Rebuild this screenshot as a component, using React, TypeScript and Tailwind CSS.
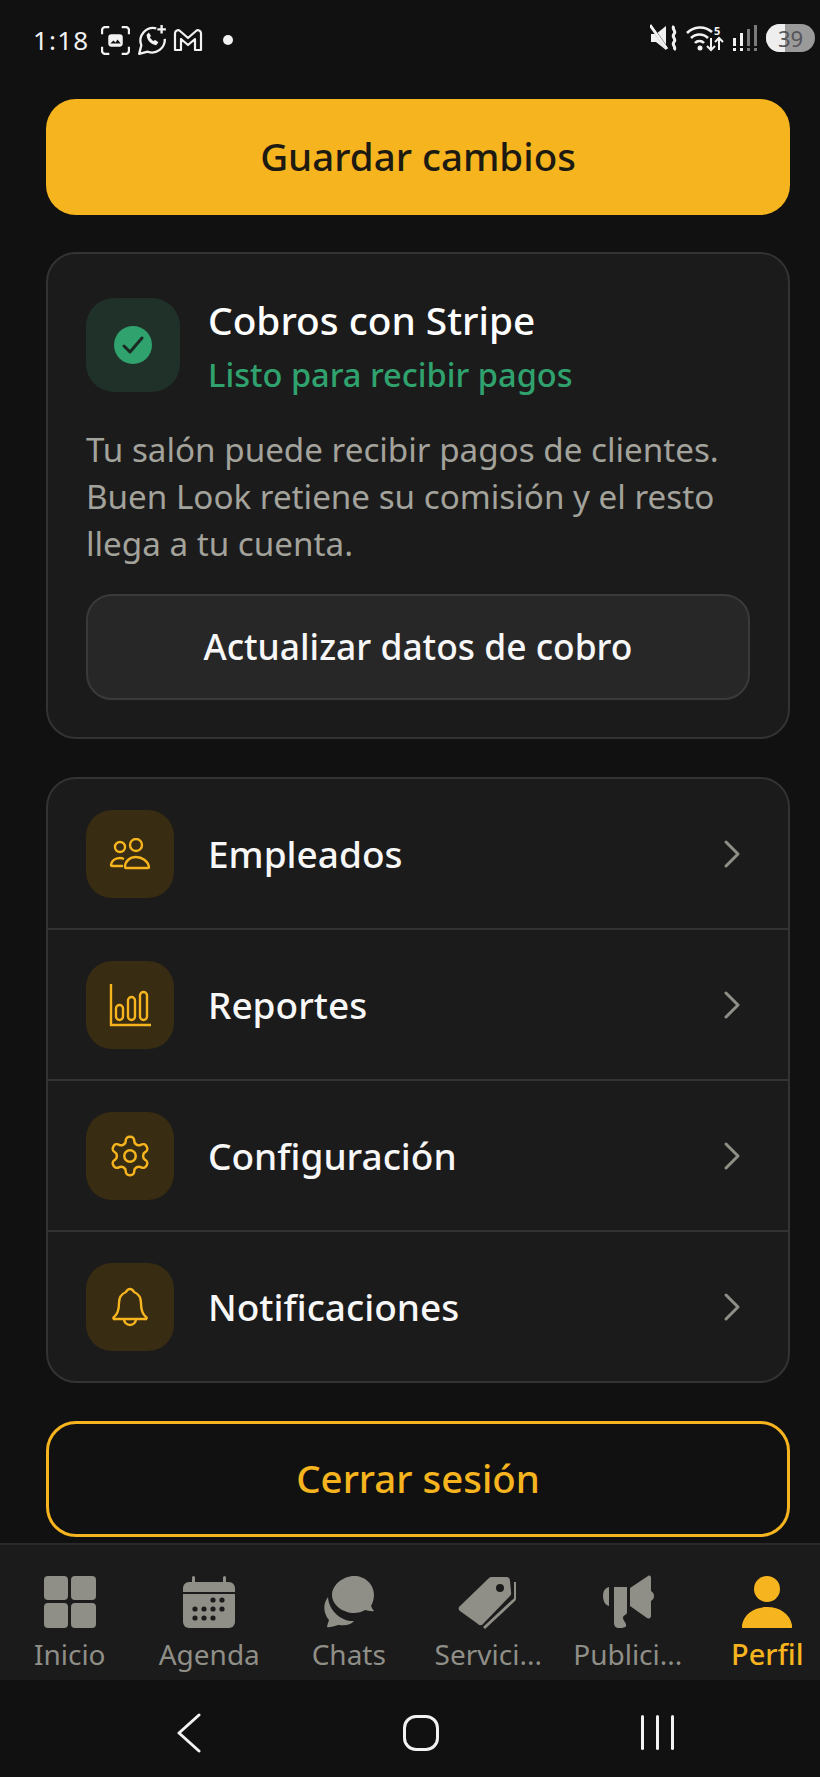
import React from "react";

const gold = "#f6b41e";
const gray = "#8f8e87";

function Row({ label, icon, last }: { label: string; icon: React.ReactNode; last?: boolean }) {
  return (
    <div className={`flex items-center pl-[38px] pr-[46px] ${last ? "h-[149px]" : "h-[151px] border-b-2 border-[#333333]"}`}>
      <div className="flex h-[88px] w-[88px] items-center justify-center rounded-[26px] bg-[#382c12]">{icon}</div>
      <span className="ml-[34px] flex-1 text-[37px] font-medium leading-none text-[#f7f7f7]">{label}</span>
      <svg width="20" height="30" viewBox="0 0 20 30" fill="none" stroke="#8f8e87" strokeWidth="3" strokeLinecap="round" strokeLinejoin="round">
        <path d="M4 3l12 12L4 27" />
      </svg>
    </div>
  );
}

function NavItem({ label, icon, active }: { label: string; icon: React.ReactNode; active?: boolean }) {
  return (
    <div className="flex w-[139.5px] shrink-0 flex-col items-center">
      <div className="flex h-[56px] items-center justify-center">{icon}</div>
      <span className={`mt-[6px] leading-[36px] ${active ? "text-[29px] font-medium text-[#f6b41e]" : "text-[28px] text-[#8f8e87]"}`}>{label}</span>
    </div>
  );
}

export default function App() {
  return (
    <div className="flex h-[1777px] w-[820px] flex-col overflow-hidden bg-[#111111] font-['Noto_Sans','Open_Sans',sans-serif]">
      {/* status bar */}
      <div className="flex h-[99px] shrink-0 items-start justify-between pl-[33px] pr-[5px] pt-[24px]">
        <div className="flex items-center">
          <span className="text-[26px] leading-[32px] tracking-[1.2px] text-[#f2f2f2]">1:18</span>
          <svg className="ml-[12px]" width="29" height="29" viewBox="0 0 28 28" fill="none" stroke="#f2f2f2" strokeWidth="2.2">
            <path d="M1 8V4a3 3 0 0 1 3-3h4M20 1h4a3 3 0 0 1 3 3v4M1 20v4a3 3 0 0 0 3 3h4M20 27h4a3 3 0 0 0 3-3v-4" />
            <rect x="7" y="8" width="14" height="12" rx="3" fill="#f2f2f2" stroke="none" />
            <path d="M9 17l3-3 2 2 2-3 3 4z" fill="#111111" stroke="none" />
          </svg>
          <svg className="ml-[6px]" width="32" height="32" viewBox="0 0 30 30" fill="none" stroke="#f2f2f2" strokeWidth="2.2">
            <path d="M19 4a12 12 0 0 0-14 16L3 28l8-2a12 12 0 0 0 16-12" strokeLinejoin="round" />
            <path d="M10 10c0 5 4 9 9 10l2-3-3-2-2 1c-1-1-2-2-3-3l1-2-2-3z" fill="#f2f2f2" stroke="none" />
            <path d="M24 1v8M20 5h8" />
          </svg>
          <svg className="ml-[5px]" width="30" height="24" viewBox="0 0 30 24" fill="none" stroke="#f2f2f2" strokeWidth="2.2" strokeLinejoin="round">
            <path d="M2 5a3 3 0 0 1 5-2l8 7 8-7a3 3 0 0 1 5 2v17h-6V11l-7 6-7-6v11H2z" />
          </svg>
          <div className="ml-[20px] h-[10px] w-[10px] rounded-full bg-[#f2f2f2]" />
        </div>
        <div className="flex items-center">
          <svg width="28" height="28" viewBox="0 0 28 28" fill="#f2f2f2">
            <path d="M1 10h5l10-8v24L6 18H1z" />
            <path d="M1 2l17 24" stroke="#111111" strokeWidth="3" />
            <path d="M0 1l17 24" stroke="#f2f2f2" strokeWidth="3" />
            <path d="M24 2c-3 3 3 5 0 8s3 5 0 8 3 5 0 8" fill="none" stroke="#f2f2f2" strokeWidth="3" />
          </svg>
          <svg className="ml-[8px]" width="38" height="28" viewBox="0 0 38 28" fill="none" stroke="#f2f2f2" strokeWidth="2.6">
            <path d="M1 9a18 18 0 0 1 25-1M5 14a12 12 0 0 1 17 0M9 19a6 6 0 0 1 9 0" />
            <circle cx="14" cy="24" r="2.5" fill="#f2f2f2" stroke="none" />
            <path d="M25 14v12M21 22l4 4 4-4M33 26V14M29 18l4-4 4 4" strokeWidth="2" />
            <text x="28" y="11" fontSize="11" fontWeight="700" fill="#f2f2f2" stroke="none" fontFamily="Noto Sans">5</text>
          </svg>
          <svg className="ml-[8px]" width="26" height="28" viewBox="0 0 26 28" fill="#f2f2f2">
            <rect x="1" y="14" width="3" height="8" />
            <rect x="1" y="24" width="3" height="3" />
            <rect x="8" y="9" width="3" height="13" />
            <rect x="8" y="24" width="3" height="3" />
            <rect x="15" y="5" width="3" height="17" fill="#7a7a7a" />
            <rect x="15" y="24" width="3" height="3" fill="#7a7a7a" />
            <rect x="22" y="1" width="3" height="21" fill="#7a7a7a" />
            <rect x="22" y="24" width="3" height="3" fill="#7a7a7a" />
          </svg>
          <div className="relative ml-[8px] flex h-[28px] w-[49px] items-center justify-center overflow-hidden rounded-full bg-[#9a9a9a]">
            <div className="absolute inset-y-0 left-0 w-[19px] bg-[#eeeeee]" />
            <span className="relative text-[22px] leading-none text-[#55555a]">39</span>
          </div>
        </div>
      </div>

      {/* content */}
      <div className="flex flex-1 flex-col pl-[46px] pr-[30px]">
        <div className="flex h-[116px] shrink-0 items-center justify-center rounded-[30px] bg-[#f6b41e] text-[38.5px] font-medium text-[#1d1a12]">
          Guardar cambios
        </div>

        <div className="mt-[37px] h-[487px] shrink-0 rounded-[30px] border-2 border-[#333333] bg-[#1b1b1b] px-[38px] pt-[44px]">
          <div className="flex h-[94px]">
            <div className="flex h-[94px] w-[94px] items-center justify-center rounded-[28px] bg-[#1f3129]">
              <svg width="40" height="40" viewBox="0 0 40 40">
                <circle cx="20" cy="20" r="19" fill="#30a26e" />
                <path d="M11 21l6 6 12-14" fill="none" stroke="#1a2a23" strokeWidth="3" strokeLinecap="round" strokeLinejoin="round" />
              </svg>
            </div>
            <div className="ml-[28px] flex flex-col">
              <span className="-mt-[2px] text-[38.8px] font-medium leading-[48px] text-white">Cobros con Stripe</span>
              <span className="mt-[9px] text-[32.6px] font-medium leading-[44px] text-[#30a26e]">Listo para recibir pagos</span>
            </div>
          </div>
          <p className="mt-[34px] text-[33.2px] leading-[47px] text-[#a3a29b]">
            Tu salón puede recibir pagos de clientes.
            <br />
            Buen Look retiene su comisión y el resto
            <br />
            llega a tu cuenta.
          </p>
          <div className="mt-[27px] flex h-[106px] items-center justify-center rounded-[26px] border-2 border-[#3a3a3a] bg-[#272727] text-[35.4px] font-medium text-[#f7f7f7]">
            Actualizar datos de cobro
          </div>
        </div>

        <div className="mt-[38px] shrink-0 overflow-hidden rounded-[30px] border-2 border-[#333333] bg-[#1b1b1b]">
          <Row
            label="Empleados"
            icon={
              <svg width="42" height="32" viewBox="0 0 42 32" fill="none" stroke={gold} strokeWidth="2.4">
                <circle cx="11" cy="9" r="5" />
                <circle cx="27" cy="7" r="6" />
                <path d="M15 21c-4-2-12-1-13 6a1 1 0 0 0 1 1h11" strokeLinejoin="round" />
                <path d="M16 29c0-6 5-10 11-10s12 4 13 10a1 1 0 0 1-1 1H17a1 1 0 0 1-1-1z" strokeLinejoin="round" />
              </svg>
            }
          />
          <Row
            label="Reportes"
            icon={
              <svg width="42" height="44" viewBox="0 0 42 44" fill="none" stroke={gold} strokeWidth="2.4">
                <path d="M2 1v41h40" />
                <rect x="7" y="22" width="7" height="15" rx="3.5" />
                <rect x="19" y="14" width="7" height="23" rx="3.5" />
                <rect x="31" y="9" width="7" height="28" rx="3.5" />
              </svg>
            }
          />
          <Row
            label="Configuración"
            icon={
              <svg width="46" height="46" viewBox="0 0 24 24" fill="none" stroke={gold} strokeWidth="1.3" strokeLinecap="round" strokeLinejoin="round">
                <path d="M12.22 2h-.44a2 2 0 0 0-2 2v.18a2 2 0 0 1-1 1.73l-.43.25a2 2 0 0 1-2 0l-.15-.08a2 2 0 0 0-2.73.73l-.22.38a2 2 0 0 0 .73 2.73l.15.1a2 2 0 0 1 1 1.72v.51a2 2 0 0 1-1 1.74l-.15.09a2 2 0 0 0-.73 2.73l.22.38a2 2 0 0 0 2.73.73l.15-.08a2 2 0 0 1 2 0l.43.25a2 2 0 0 1 1 1.73V20a2 2 0 0 0 2 2h.44a2 2 0 0 0 2-2v-.18a2 2 0 0 1 1-1.73l.43-.25a2 2 0 0 1 2 0l.15.08a2 2 0 0 0 2.73-.73l.22-.39a2 2 0 0 0-.73-2.73l-.15-.08a2 2 0 0 1-1-1.74v-.5a2 2 0 0 1 1-1.74l.15-.09a2 2 0 0 0 .73-2.73l-.22-.38a2 2 0 0 0-2.73-.73l-.15.08a2 2 0 0 1-2 0l-.43-.25a2 2 0 0 1-1-1.73V4a2 2 0 0 0-2-2z" />
                <circle cx="12" cy="12" r="3" />
              </svg>
            }
          />
          <Row
            last
            label="Notificaciones"
            icon={
              <svg width="36" height="40" viewBox="0 0 36 40" fill="none" stroke={gold} strokeWidth="2.4" strokeLinejoin="round">
                <path d="M18 2c-2 0-3 1-4 3-5 2-7 6-7 11 0 7-1 11-5 14a1 1 0 0 0 1 2h30a1 1 0 0 0 1-2c-4-3-5-7-5-14 0-5-2-9-7-11-1-2-2-3-4-3z" />
                <path d="M12 32a6 6 0 0 0 12 0" />
              </svg>
            }
          />
        </div>

        <div className="mt-[38px] flex h-[116px] shrink-0 items-center justify-center rounded-[30px] border-[3px] border-[#f6b41e] text-[38.4px] font-medium text-[#f6b41e]">
          Cerrar sesión
        </div>
      </div>

      {/* tab bar */}
      <div className="flex h-[137px] shrink-0 border-t-2 border-[#2a2a2a] bg-[#1b1b1b] pt-[29px]">
        <NavItem
          label="Inicio"
          icon={
            <svg width="52" height="52" viewBox="0 0 52 52" fill={gray}>
              <rect x="0" y="0" width="24" height="24" rx="4" />
              <rect x="27" y="0" width="25" height="24" rx="4" />
              <rect x="0" y="27" width="24" height="25" rx="4" />
              <rect x="27" y="27" width="25" height="25" rx="4" />
            </svg>
          }
        />
        <NavItem
          label="Agenda"
          icon={
            <svg width="52" height="52" viewBox="0 0 52 52" fill={gray}>
              <path d="M0 12a6 6 0 0 1 6-6h3V1.500a1.500 1.500 0 0 1 3 0V6h28V1.500a1.500 1.500 0 0 1 3 0V6h3a6 6 0 0 1 6 6v4H0z" />
              <path d="M0 18h52v28a6 6 0 0 1-6 6H6a6 6 0 0 1-6-6z" />
              <g fill="#1b1b1b">
                <circle cx="30" cy="24" r="2.600" /><circle cx="39" cy="24" r="2.600" />
                <circle cx="12" cy="33" r="2.600" /><circle cx="21" cy="33" r="2.600" /><circle cx="30" cy="33" r="2.600" /><circle cx="39" cy="33" r="2.600" />
                <circle cx="12" cy="42" r="2.600" /><circle cx="21" cy="42" r="2.600" /><circle cx="30" cy="42" r="2.600" />
              </g>
            </svg>
          }
        />
        <NavItem
          label="Chats"
          icon={
            <svg width="52" height="52" viewBox="0 0 52 52" fill={gray}>
              <path d="M5 21c-6 8-4 17 1 23-1 3-2 6-2 7 4 1 10-2 12-2 6 1 12 0 15-4-10 1-25-8-26-24z" />
              <path d="M31 0c11 0 20 8 20 19 0 5-2 9-3 11 1 2 2 4 3 5-3 1-7-1-9-1-3 2-7 3-11 3C20 37 9 29 9 19S20 0 31 0z" />
            </svg>
          }
        />
        <NavItem
          label="Servici..."
          icon={
            <svg width="60" height="56" viewBox="0 0 60 56" fill={gray}>
              <path d="M2 32L31 4a4 4 0 0 1 3-1h14a4 4 0 0 1 4 4l1 11a4 4 0 0 1-1 4L25 50a3 3 0 0 1-5 0L2 37a3 3 0 0 1 0-5zM42 10a4 4 0 1 0 0 8 4 4 0 0 0 0-8z" fillRule="evenodd" />
              <path d="M56 8h2v16a4 4 0 0 1-1 3L27 55l-2-2 29-27a3 3 0 0 0 2-2z" />
            </svg>
          }
        />
        <NavItem
          label="Publici..."
          icon={
            <svg width="52" height="54" viewBox="0 0 52 54" fill={gray}>
              <path d="M7 12v19c-4-1-6-5-6-10s2-8 6-9z" />
              <path d="M12 12h13v25c0 4-4 2-4 6 0 3 4 5 3 8-1 2-5 2-7 2-3 0-5-2-5-5z" />
              <path d="M28 13L46 1c2-1 3 0 3 2v13c2 1 3 3 3 5s-1 4-3 5v15c0 2-2 3-4 2L28 31z" />
            </svg>
          }
        />
        <NavItem
          active
          label="Perfil"
          icon={
            <svg width="50" height="52" viewBox="0 0 50 52" fill={gold}>
              <circle cx="25" cy="13" r="13" />
              <path d="M1 52c-2 0-1-2-1-3 2-11 12-18 25-18s23 7 25 18c0 1 1 3-1 3z" />
            </svg>
          }
        />
      </div>

      {/* system nav */}
      <div className="relative flex h-[97px] shrink-0 items-start bg-[#111111] pl-[176px] pt-[33px]">
        <svg width="26" height="40" viewBox="0 0 26 40" fill="none" stroke="#f2f2f2" strokeWidth="3" strokeLinecap="round" strokeLinejoin="round">
          <path d="M23 2L3 20l20 18" />
        </svg>
        <div className="ml-[201px] mt-[2px] h-[36px] w-[36px] rounded-[13px] border-[3px] border-[#f2f2f2]" />
        <div className="ml-[202px] mt-[2px] flex gap-[12px]">
          <div className="h-[35px] w-[3px] rounded-full bg-[#f2f2f2]" />
          <div className="h-[35px] w-[3px] rounded-full bg-[#f2f2f2]" />
          <div className="h-[35px] w-[3px] rounded-full bg-[#f2f2f2]" />
        </div>
      </div>
    </div>
  );
}
